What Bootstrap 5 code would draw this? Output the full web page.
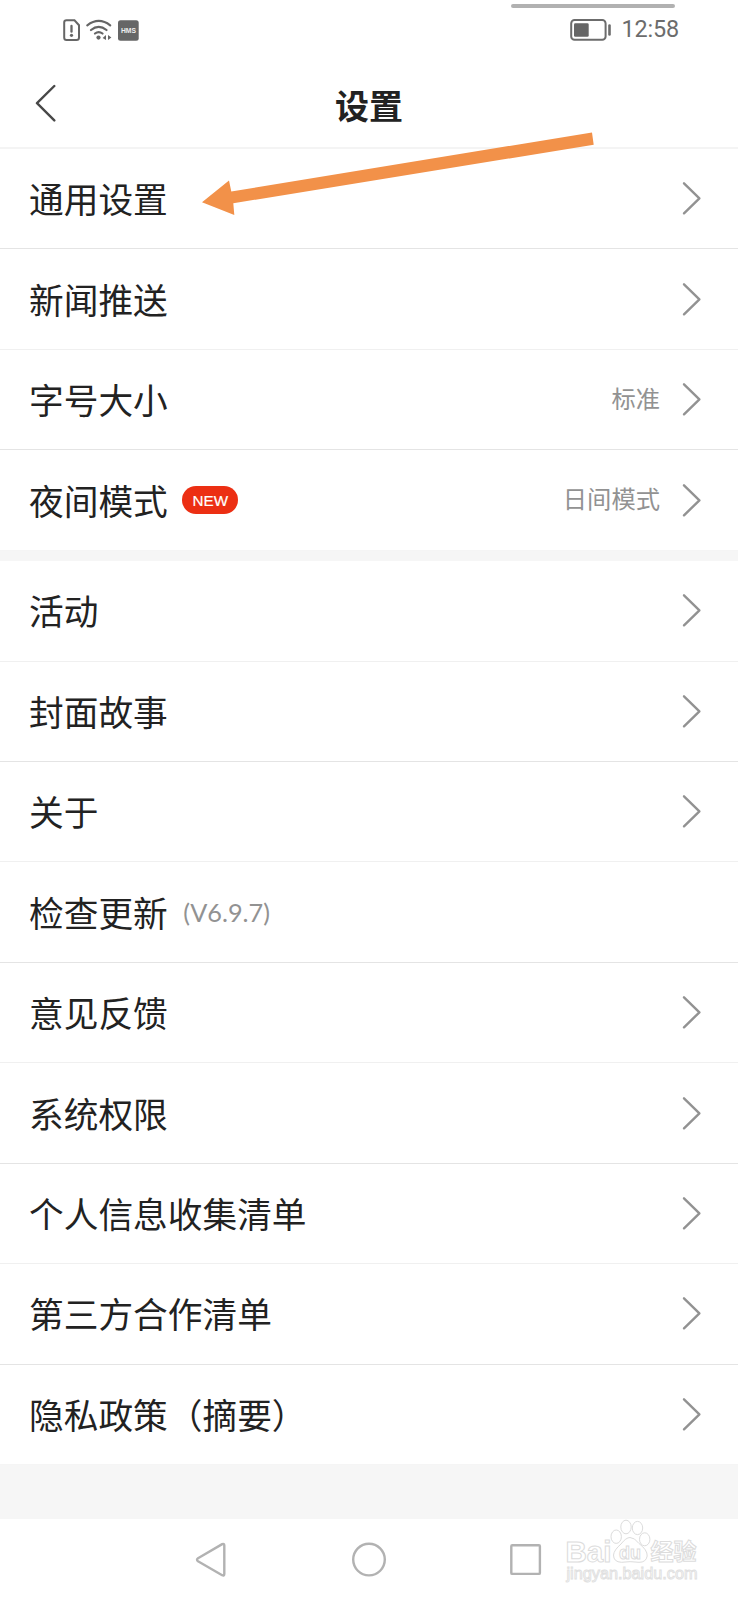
<!DOCTYPE html>
<html lang="zh-CN">
<head>
<meta charset="utf-8">
<meta name="viewport" content="width=device-width, initial-scale=1">
<title>设置</title>
<link href="https://cdn.jsdelivr.net/npm/bootstrap@5.3.0/dist/css/bootstrap.min.css" rel="stylesheet">
<style>
  body { font-family: "Noto Sans CJK SC", sans-serif; color: #222; background: #fff; }
  .screen { width: 738px; height: 1600px; }
  .status-bar { height: 59px; padding: 0 59px 0 62px; }
  .pull-handle { top: 4px; left: 511px; width: 164px; height: 4px; background: #b1b1b1; }
  .clock { font: 400 23.4px/1 Roboto, sans-serif; color: #6c6c6c; letter-spacing: -.15px; margin-left: 10px; padding-top: 1px; }
  .app-bar { height: 90px; border-bottom: 2px solid #f4f4f4; }
  .app-bar h1 { font-size: 34px; line-height: 50px; padding-top: 3px; }
  .back { left: 35px; top: 25px; }
  .setting { height: 100.45px; padding: 0 36px 0 29px; border: 0; border-bottom: 1px solid #e4e4e4; border-radius: 0; color: #222; background: #fff; }
  .setting.soft-line { border-bottom-color: #f0f0f0; }
  .setting:last-child { border-bottom-color: #f5f5f5; }
  .setting-label { font-size: 34.7px; line-height: 50px; margin-top: -1px; }
  .setting-note { font-size: 24.3px; line-height: 36px; color: #929292; margin-top: -4px; }
  .version { margin-left: 15.5px; margin-top: 0; font-family: Lato, sans-serif; font-size: 25.3px; }
  .new-pill { margin-left: 14.5px; width: 56px; height: 28px; background: #ec2f13; font: 500 15.2px/29px "Liberation Sans", sans-serif; padding: 0; -webkit-text-stroke: .2px #fff; }
  .chevron { margin-left: 22px; margin-top: -1px; }
  .gap-band { height: 10.4px; background: #f6f6f6; }
  .end-band { height: 53.5px; background: #f6f6f6; }
  .nav-keys { height: 81px; }
  .pointer { left: 195px; top: 125px; }
  .watermark { left: 560px; top: 1515px; }
</style>
</head>
<body>
<main class="screen position-relative overflow-hidden d-flex flex-column">
  <div class="pull-handle position-absolute rounded-pill"></div>
  <div class="status-bar d-flex align-items-center justify-content-between flex-shrink-0">
    <svg width="80" height="24" viewBox="62 17 80 24" fill="none" stroke="#666" stroke-linecap="round">
      <path d="M66.5 19.3H74.5L79 24.2V36.5Q79 39 76.5 39H66.5Q64.2 39 64.2 36.5V21.6Q64.2 19.3 66.5 19.3Z" stroke-width="2"/>
      <path d="M71.5 25V30.7" stroke-width="2.3"/><circle cx="71.5" cy="34.3" r="1.6" fill="#666" stroke="none"/>
      <path d="M87.3 24.3Q98.7 15.6 110.2 24.3M91 29Q98.7 22.6 106.5 29M95 32.5Q98.7 29.6 102.5 32.5" stroke-width="2.2"/>
      <circle cx="98.5" cy="36.6" r="2.1" fill="#666" stroke="none"/>
      <path d="M106 34V39L102.6 37ZM108 34V39L111.4 36.5Z" fill="#666" stroke="none"/>
      <rect x="118" y="19.3" width="20.7" height="20.5" rx="2.5" fill="#666" stroke="none"/>
      <text x="128.4" y="32" text-anchor="middle" textLength="15" lengthAdjust="spacingAndGlyphs" font-family="Liberation Sans" font-size="6.7" font-weight="700" fill="#eee" stroke="none">HMS</text>
    </svg>
    <div class="d-flex align-items-center">
      <svg width="42" height="24" viewBox="570 17 42 24">
        <rect x="571.2" y="19" width="34.4" height="19.8" rx="3.4" fill="none" stroke="#6c6c6c" stroke-width="2"/>
        <rect x="574" y="22.2" width="14.7" height="13.5" rx="1.3" fill="#666"/>
        <rect x="608.2" y="23.2" width="2.6" height="11.6" rx="1.3" fill="#6c6c6c"/>
      </svg>
      <time class="clock">12:58</time>
    </div>
  </div>
  <header class="app-bar position-relative d-flex align-items-center justify-content-center flex-shrink-0">
    <svg class="back position-absolute" width="22" height="38" viewBox="0 0 22 38" fill="none" stroke="#484848" stroke-width="2.4" stroke-linecap="round" stroke-linejoin="round"><path d="M19.3 2L2 19.2L19.3 36.4"/></svg>
    <h1 class="fw-bold mb-0">设置</h1>
  </header>

  <svg class="d-none"><symbol id="chev" viewBox="0 0 20 34"><path d="M2 2.3L17.4 17.3L2 32.3" fill="none" stroke="#929292" stroke-width="2.4" stroke-linecap="round" stroke-linejoin="round"/></symbol></svg>

  <section class="list-group list-group-flush flex-shrink-0">
    <div class="setting d-flex align-items-center"><span class="setting-label me-auto">通用设置</span><svg class="chevron" width="20" height="34"><use href="#chev"/></svg></div>
    <div class="setting soft-line d-flex align-items-center"><span class="setting-label me-auto">新闻推送</span><svg class="chevron" width="20" height="34"><use href="#chev"/></svg></div>
    <div class="setting d-flex align-items-center"><span class="setting-label me-auto">字号大小</span><span class="setting-note">标准</span><svg class="chevron" width="20" height="34"><use href="#chev"/></svg></div>
    <div class="setting d-flex align-items-center"><span class="setting-label">夜间模式</span><span class="new-pill badge rounded-pill me-auto">NEW</span><span class="setting-note">日间模式</span><svg class="chevron" width="20" height="34"><use href="#chev"/></svg></div>
  </section>
  <div class="gap-band flex-shrink-0"></div>
  <section class="list-group list-group-flush flex-shrink-0">
    <div class="setting soft-line d-flex align-items-center"><span class="setting-label me-auto">活动</span><svg class="chevron" width="20" height="34"><use href="#chev"/></svg></div>
    <div class="setting d-flex align-items-center"><span class="setting-label me-auto">封面故事</span><svg class="chevron" width="20" height="34"><use href="#chev"/></svg></div>
    <div class="setting soft-line d-flex align-items-center"><span class="setting-label me-auto">关于</span><svg class="chevron" width="20" height="34"><use href="#chev"/></svg></div>
    <div class="setting d-flex align-items-center"><span class="setting-label">检查更新</span><span class="setting-note version">(V6.9.7)</span></div>
    <div class="setting soft-line d-flex align-items-center"><span class="setting-label me-auto">意见反馈</span><svg class="chevron" width="20" height="34"><use href="#chev"/></svg></div>
    <div class="setting d-flex align-items-center"><span class="setting-label me-auto">系统权限</span><svg class="chevron" width="20" height="34"><use href="#chev"/></svg></div>
    <div class="setting soft-line d-flex align-items-center"><span class="setting-label me-auto">个人信息收集清单</span><svg class="chevron" width="20" height="34"><use href="#chev"/></svg></div>
    <div class="setting d-flex align-items-center"><span class="setting-label me-auto">第三方合作清单</span><svg class="chevron" width="20" height="34"><use href="#chev"/></svg></div>
    <div class="setting d-flex align-items-center"><span class="setting-label me-auto">隐私政策（摘要）</span><svg class="chevron" width="20" height="34"><use href="#chev"/></svg></div>
  </section>
  <div class="end-band flex-shrink-0"></div>
  <nav class="nav-keys flex-shrink-0">
    <svg class="d-block" width="738" height="81" viewBox="0 1519 738 81" fill="none" stroke="#b2b2b2" stroke-width="2.4" stroke-linejoin="round">
      <path d="M198 1558.2L222.2 1544.1Q224.3 1543.4 224.3 1545.4V1574Q224.3 1576.2 222.2 1575.2L198 1561.2Q196 1559.7 198 1558.2Z"/>
      <circle cx="369" cy="1559.6" r="15.8"/>
      <rect x="511.3" y="1545.3" width="28.6" height="28.6" rx="1"/>
    </svg>
  </nav>

  <svg class="pointer position-absolute" width="405" height="95" viewBox="195 125 405 95"><path d="M202 202.3L229 180.5L231.3 191.5L592 132.4L593.7 144.7L233.3 203.3L234.3 215Z" fill="#f29149"/></svg>

  <svg class="watermark position-absolute" width="145" height="75" viewBox="560 1515 145 75" fill="#fff" stroke="#dcdcdc" stroke-width="1" font-family="Liberation Sans" font-weight="700">
    <text x="565.5" y="1561.5" font-size="29" textLength="46" lengthAdjust="spacingAndGlyphs">Bai</text>
    <ellipse cx="616.2" cy="1536.7" rx="5.2" ry="6.7"/>
    <ellipse cx="626" cy="1527" rx="5.2" ry="6.8"/>
    <ellipse cx="637.5" cy="1528" rx="5.2" ry="6.6"/>
    <ellipse cx="644.7" cy="1539.3" rx="5.2" ry="6.5"/>
    <path d="M630 1537.5Q634.5 1537.5 639 1543.5Q647.5 1550 647.2 1556Q646 1562.5 639 1562.3Q630 1561 621.5 1562.3Q613.5 1562 613.5 1555Q614 1550 621 1544Q626 1537.5 630 1537.5Z"/>
    <text x="619" y="1558.7" font-size="19" textLength="22" lengthAdjust="spacingAndGlyphs">du</text>
    <text x="650.5" y="1560" font-size="23" textLength="46" lengthAdjust="spacingAndGlyphs" font-family="Noto Sans CJK SC">经验</text>
    <text x="566.5" y="1579" font-size="16" textLength="131" lengthAdjust="spacingAndGlyphs" font-weight="400" stroke="#e0e0e0" stroke-width=".9">jingyan.baidu.com</text>
  </svg>
</main>
<script src="https://cdn.jsdelivr.net/npm/bootstrap@5.3.0/dist/js/bootstrap.bundle.min.js"></script>
</body>
</html>
